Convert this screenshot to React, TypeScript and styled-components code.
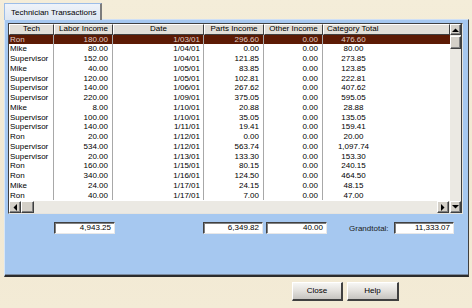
import { FC } from 'react';
import styled, { createGlobalStyle } from 'styled-components';

const GlobalStyle = createGlobalStyle`
    html, body {
        margin: 0;
        padding: 0;
        background: #f2ead5;
    }
    * {
        box-sizing: border-box;
    }
`;

const Colors = {
    beige: '#f2ead5',
    panel: '#a6c8f0',
    face: '#d4d0c8',
    track: '#ebe9e3',
    dark: '#404040',
    shadow: '#808080',
    selected: '#5c1a04',
    selectedText: '#dcc8c0',
    line: '#a8a8a8',
};

const Page = styled.div`
    width: 472px;
    height: 308px;
    padding: 3px 3px 0 4px;
    font-family: "Liberation Sans", Arial, sans-serif;
    font-size: 8px;
    color: #000;
    background: linear-gradient(180deg, #f4edd9 0%, #f1e8d2 60%, #f3ebd6 100%);
    display: flex;
    flex-direction: column;
`;

const TabStrip = styled.div`
    display: flex;
    height: 17px;
    margin-bottom: -1px;
    position: relative;
    z-index: 1;
`;

const Tab = styled.div`
    width: 98px;
    padding: 4px 0 0 6px;
    background: linear-gradient(180deg, #eef3fa 0%, #dde6f2 100%);
    border-top: 1px solid #9cbde8;
    border-left: 1px solid #9cbde8;
    border-right: 2px solid #7c7c7c;
    white-space: nowrap;
`;

const Panel = styled.div`
    width: 465px;
    height: 258px;
    background: ${Colors.panel};
    border-top: 1px solid #cfe0f6;
    border-left: 1px solid #d6e6f8;
    border-right: 1px solid ${Colors.dark};
    border-bottom: 2px solid #2c2c2c;
    box-shadow: inset 0 -1px 0 #7a8aa0;
    padding: 3px 0 0 3px;
    display: flex;
    flex-direction: column;
`;

const Frame = styled.div`
    width: 455px;
    height: 191px;
    border-top: 1px solid ${Colors.dark};
    border-left: 1px solid ${Colors.dark};
    border-right: 1px solid #e6e4de;
    border-bottom: 1px solid #e6e4de;
    background: #fff;
    display: grid;
    grid-template-columns: 1fr 12px;
    grid-template-rows: 1fr 12px;
`;

const Table = styled.div`
    grid-column: 1;
    grid-row: 1;
    overflow: hidden;
    display: flex;
    flex-direction: column;
`;

const cols = '45px 59px 91px 60px 59px 1fr';

const HeaderRow = styled.div`
    display: grid;
    grid-template-columns: ${cols};
    height: 10.5px;
    background: ${Colors.face};
`;

const HeaderCell = styled.div<{ $align: string }>`
    border-top: 1px solid #fff;
    border-left: 1px solid #fff;
    border-right: 1px solid ${Colors.dark};
    border-bottom: 1px solid ${Colors.dark};
    background: #e2dfd8;
    line-height: 8.5px;
    text-align: ${p => p.$align};
    padding-left: ${p => (p.$align === 'left' ? '3px' : '0')};
    white-space: nowrap;
    overflow: hidden;
`;

const Row = styled.div<{ $selected?: boolean }>`
    display: grid;
    grid-template-columns: ${cols};
    height: 9.75px;
    line-height: 9.75px;
    background: ${p => (p.$selected ? Colors.selected : '#fff')};
    color: ${p => (p.$selected ? Colors.selectedText : '#000')};
`;

const Cell = styled.div<{ $align: string; $pad: number }>`
    border-right: 1px solid ${Colors.line};
    text-align: ${p => p.$align};
    padding-left: ${p => (p.$align === 'left' ? p.$pad : 0)}px;
    padding-right: ${p => (p.$align === 'left' ? 0 : p.$pad)}px;
    white-space: nowrap;
    overflow: hidden;

    &:last-child {
        border-right: none;
    }
`;

const VScroll = styled.div`
    grid-column: 2;
    grid-row: 1 / span 2;
    background: ${Colors.track};
    border-right: 1px solid ${Colors.dark};
    display: flex;
    flex-direction: column;
    gap: 1px;
`;

const HScroll = styled.div`
    grid-column: 1;
    grid-row: 2;
    background: ${Colors.track};
    display: flex;
    flex-direction: row;
    padding-right: 1px;
`;

const ScrollButton = styled.div<{ $w: number; $h: number; $push?: boolean }>`
    width: ${p => p.$w}px;
    height: ${p => p.$h}px;
    flex: none;
    margin-top: ${p => (p.$push ? 'auto' : '0')};
    background: ${Colors.face};
    border-top: 1px solid #fff;
    border-left: 1px solid #fff;
    border-right: 1px solid ${Colors.dark};
    border-bottom: 1px solid ${Colors.dark};
    box-shadow: inset -1px -1px 0 ${Colors.shadow};
    display: flex;
    align-items: center;
    justify-content: center;
`;

const Spacer = styled.div`
    flex: 1;
`;

const TotalsRow = styled.div`
    display: flex;
    align-items: center;
    margin-top: 8px;
    height: 12px;
`;

const TotalBox = styled.div<{ $w: number; $ml: number }>`
    width: ${p => p.$w}px;
    height: 12px;
    margin-left: ${p => p.$ml}px;
    background: #fff;
    border-top: 1px solid ${Colors.dark};
    border-left: 1px solid ${Colors.dark};
    border-right: 1px solid #e8e8e8;
    border-bottom: 1px solid #e8e8e8;
    box-shadow: inset 1px 1px 0 ${Colors.shadow};
    text-align: right;
    padding-right: 3px;
    line-height: 10px;
`;

const Label = styled.span`
    margin-left: 22px;
    width: 38px;
    color: #202020;
`;

const ButtonBar = styled.div`
    display: flex;
    gap: 4px;
    padding-left: 288px;
    margin-top: 5px;
`;

const Button = styled.div<{ $w: number }>`
    width: ${p => p.$w}px;
    height: 19px;
    background: linear-gradient(180deg, #f6f6f4 0%, #e2e0dc 50%, #c6c4c0 100%);
    border-top: 1px solid #fff;
    border-left: 1px solid #fff;
    border-right: 2px solid ${Colors.dark};
    border-bottom: 2px solid ${Colors.dark};
    display: flex;
    align-items: center;
    justify-content: center;
    padding-bottom: 1px;
`;

type Dir = 'up' | 'down' | 'left' | 'right';

const Arrow: FC<{ dir: Dir }> = ({ dir }) => {
    const pts: Record<Dir, string> = {
        up: '0,4 3.5,0.5 7,4',
        down: '0,0 3.5,3.5 7,0',
        left: '4,0 0.5,3.5 4,7',
        right: '0,0 3.5,3.5 0,7',
    };
    const vertical = dir === 'up' || dir === 'down';
    return (
        <svg width={vertical ? 7 : 4} height={vertical ? 4 : 7} viewBox={vertical ? '0 0 7 4' : '0 0 4 7'}>
            <polygon points={pts[dir]} fill="#000" />
        </svg>
    );
};

const headers: { label: string; align: string }[] = [
    { label: 'Tech', align: 'center' },
    { label: 'Labor Income', align: 'center' },
    { label: 'Date', align: 'center' },
    { label: 'Parts Income', align: 'center' },
    { label: 'Other Income', align: 'center' },
    { label: 'Category Total', align: 'left' },
];

// [tech, labor, date, parts, other, total]
const rows: string[][] = [
    ['Ron', '180.00', '1/03/01', '296.60', '0.00', '476.60'],
    ['Mike', '80.00', '1/04/01', '0.00', '0.00', '80.00'],
    ['Supervisor', '152.00', '1/04/01', '121.85', '0.00', '273.85'],
    ['Mike', '40.00', '1/05/01', '83.85', '0.00', '123.85'],
    ['Supervisor', '120.00', '1/05/01', '102.81', '0.00', '222.81'],
    ['Supervisor', '140.00', '1/06/01', '267.62', '0.00', '407.62'],
    ['Supervisor', '220.00', '1/09/01', '375.05', '0.00', '595.05'],
    ['Mike', '8.00', '1/10/01', '20.88', '0.00', '28.88'],
    ['Supervisor', '100.00', '1/10/01', '35.05', '0.00', '135.05'],
    ['Supervisor', '140.00', '1/11/01', '19.41', '0.00', '159.41'],
    ['Ron', '20.00', '1/12/01', '0.00', '0.00', '20.00'],
    ['Supervisor', '534.00', '1/12/01', '563.74', '0.00', '1,097.74'],
    ['Supervisor', '20.00', '1/13/01', '133.30', '0.00', '153.30'],
    ['Ron', '160.00', '1/15/01', '80.15', '0.00', '240.15'],
    ['Ron', '340.00', '1/16/01', '124.50', '0.00', '464.50'],
    ['Mike', '24.00', '1/17/01', '24.15', '0.00', '48.15'],
    ['Ron', '40.00', '1/17/01', '7.00', '0.00', '47.00'],
];

const cellAlign = ['left', 'right', 'right', 'right', 'right', 'center'];
const cellPad = [1, 4, 3, 4, 4, 66];

export default function App() {
    return (
        <>
            <GlobalStyle />
            <Page>
                <TabStrip>
                    <Tab>Technician Transactions</Tab>
                </TabStrip>
                <Panel>
                    <Frame>
                        <Table>
                            <HeaderRow>
                                {headers.map(h => (
                                    <HeaderCell key={h.label} $align={h.align}>{h.label}</HeaderCell>
                                ))}
                            </HeaderRow>
                            {rows.map((r, i) => (
                                <Row key={i} $selected={i === 0}>
                                    {r.map((v, j) => (
                                        <Cell key={j} $align={cellAlign[j]} $pad={cellPad[j]}>{v}</Cell>
                                    ))}
                                </Row>
                            ))}
                        </Table>
                        <VScroll>
                            <ScrollButton $w={11} $h={11}><Arrow dir="up" /></ScrollButton>
                            <ScrollButton $w={11} $h={13} />
                            <ScrollButton $w={11} $h={12} $push><Arrow dir="down" /></ScrollButton>
                        </VScroll>
                        <HScroll>
                            <ScrollButton $w={12} $h={12}><Arrow dir="left" /></ScrollButton>
                            <ScrollButton $w={13} $h={12} />
                            <Spacer />
                            <ScrollButton $w={12} $h={12}><Arrow dir="right" /></ScrollButton>
                        </HScroll>
                    </Frame>
                    <TotalsRow>
                        <TotalBox $w={61} $ml={46}>4,943.25</TotalBox>
                        <TotalBox $w={60} $ml={88}>6,349.82</TotalBox>
                        <TotalBox $w={61} $ml={3}>40.00</TotalBox>
                        <Label>Grandtotal:</Label>
                        <TotalBox $w={60} $ml={7}>11,333.07</TotalBox>
                    </TotalsRow>
                </Panel>
                <ButtonBar>
                    <Button $w={51}>Close</Button>
                    <Button $w={52}>Help</Button>
                </ButtonBar>
            </Page>
        </>
    );
}
